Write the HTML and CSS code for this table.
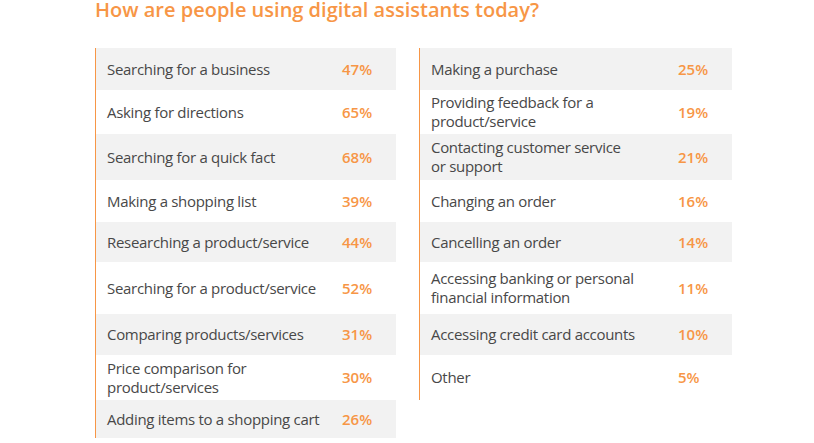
FILE: index.html
```html
<!DOCTYPE html>
<html lang="en">
<head>
<meta charset="utf-8">
<title>How are people using digital assistants today?</title>
<link rel="stylesheet" href="styles.css">
</head>
<body>
<main class="page">
  <h1 class="title">How are people using digital assistants today?</h1>
  <div class="tables">
    <div class="table table-left">
      <div class="row r1 shade"><span class="label">Searching for a business</span><span class="pct">47%</span></div>
      <div class="row r2"><span class="label">Asking for directions</span><span class="pct">65%</span></div>
      <div class="row r3 shade"><span class="label">Searching for a quick fact</span><span class="pct">68%</span></div>
      <div class="row r4"><span class="label">Making a shopping list</span><span class="pct">39%</span></div>
      <div class="row r5 shade"><span class="label">Researching a product/service</span><span class="pct">44%</span></div>
      <div class="row r6"><span class="label">Searching for a product/service</span><span class="pct">52%</span></div>
      <div class="row r7 shade"><span class="label">Comparing products/services</span><span class="pct">31%</span></div>
      <div class="row r8"><span class="label">Price comparison for<br>product/services</span><span class="pct">30%</span></div>
      <div class="row r9 shade"><span class="label">Adding items to a shopping cart</span><span class="pct">26%</span></div>
    </div>
    <div class="table table-right">
      <div class="row r1 shade"><span class="label">Making a purchase</span><span class="pct">25%</span></div>
      <div class="row r2"><span class="label">Providing feedback for a<br>product/service</span><span class="pct">19%</span></div>
      <div class="row r3 shade"><span class="label">Contacting customer service<br>or support</span><span class="pct">21%</span></div>
      <div class="row r4"><span class="label">Changing an order</span><span class="pct">16%</span></div>
      <div class="row r5 shade"><span class="label">Cancelling an order</span><span class="pct">14%</span></div>
      <div class="row r6"><span class="label">Accessing banking or personal<br>financial information</span><span class="pct">11%</span></div>
      <div class="row r7 shade"><span class="label">Accessing credit card accounts</span><span class="pct">10%</span></div>
      <div class="row r8"><span class="label">Other</span><span class="pct">5%</span></div>
    </div>
  </div>
</main>
</body>
</html>
```

FILE: styles.css
```css
* { box-sizing: border-box; }

html, body {
  margin: 0;
  padding: 0;
  background: #ffffff;
}

.page {
  padding-left: 95px;
  font-family: "Open Sans", "Noto Sans", sans-serif;
}

.title {
  margin: 0;
  height: 48px;
  padding-top: 0;
  font-size: 20px;
  line-height: 20px;
  font-weight: 600;
  color: #f79646;
}

.tables {
  display: flex;
  align-items: flex-start;
  gap: 23px;
}

.table {
  display: grid;
  grid-template-rows: 42px 44px 46px 42px 40px 52px 41px 45px;
  border-left: 1px solid #f79646;
}

.table-left {
  width: 301px;
  grid-template-rows: 42px 44px 46px 42px 40px 52px 41px 45px 38px;
}

.table-right {
  width: 313px;
}

.row {
  display: grid;
  align-items: center;
  font-size: 15px;
  line-height: 19px;
  color: #484848;
}

.table-left .row { grid-template-columns: 246px 1fr; }
.table-right .row { grid-template-columns: 258px 1fr; }

.shade { background: #f2f2f2; }

.label {
  padding-left: 11px;
  white-space: nowrap;
  letter-spacing: -0.3px;
}

.pct {
  color: #f79646;
  font-weight: 600;
}
```
